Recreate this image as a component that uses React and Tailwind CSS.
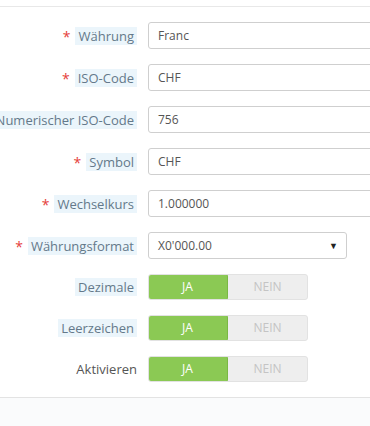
import React from 'react';

const font = { fontFamily: '"Open Sans", "Liberation Sans", sans-serif' };

const Label = ({ text, required, tip = true }) => (
  <div className="w-[137px] shrink-0 flex justify-end items-center whitespace-nowrap">
    {required && <span className="text-[#e5403a] text-[14px] mr-[5px] leading-none mt-[2px]">*</span>}
    {tip ? (
      <span className="bg-[#ebf5fb] text-[#64798a] text-[13px] leading-[18px] px-[3px]">{text}</span>
    ) : (
      <span className="text-[#555] text-[13px] leading-[18px]">{text}</span>
    )}
  </div>
);

const TextRow = ({ label, value, required, tip }) => (
  <div className="flex items-center h-[27px]">
    <Label text={label} required={required} tip={tip} />
    <div className="ml-[11px] w-[260px] shrink-0 h-[27px] border border-[#cfcfcf] rounded-[3px] bg-white px-[9px] flex items-center text-[12px] text-[#555]">
      {value}
    </div>
  </div>
);

const SwitchRow = ({ label, tip = true }) => (
  <div className="flex items-center h-[26px]">
    <Label text={label} tip={tip} />
    <div className="ml-[11px] w-[160px] h-[26px] flex rounded-[3px] overflow-hidden bg-[#eeeeee] border border-[#e2e2e2]">
      <div className="w-[80px] bg-[#8bc954] border-r border-[#7ab844] flex items-center justify-center text-white text-[12px] -my-px -ml-px h-[26px] rounded-[3px]">
        JA
      </div>
      <div className="flex-1 flex items-center justify-center text-[#c4c4c4] text-[12px]">NEIN</div>
    </div>
  </div>
);

export default function App() {
  return (
    <div className="w-[370px] h-[426px] overflow-hidden bg-white flex flex-col" style={font}>
      <div className="h-[7px] border-b border-[#e8e8e8] shrink-0" />
      <div className="pt-[15px] pb-[15px] flex flex-col gap-[15px]">
        <TextRow label="Währung" value="Franc" required />
        <TextRow label="ISO-Code" value="CHF" required />
        <TextRow label="Numerischer ISO-Code" value="756" />
        <TextRow label="Symbol" value="CHF" required />
        <TextRow label="Wechselkurs" value="1.000000" required />
        <div className="flex items-center h-[27px]">
          <Label text="Währungsformat" required />
          <div className="ml-[11px] w-[199px] h-[27px] border border-[#cfcfcf] rounded-[3px] bg-white pl-[9px] pr-[8px] flex items-center justify-between text-[12px] text-[#555]">
            <span>X0'000.00</span>
            <span className="text-[#222] text-[9px]">▼</span>
          </div>
        </div>
        <SwitchRow label="Dezimale" />
        <SwitchRow label="Leerzeichen" />
        <SwitchRow label="Aktivieren" tip={false} />
      </div>
      <div className="flex-1 border-t border-[#e3e3e3] bg-[#fafbfc]" />
    </div>
  );
}
